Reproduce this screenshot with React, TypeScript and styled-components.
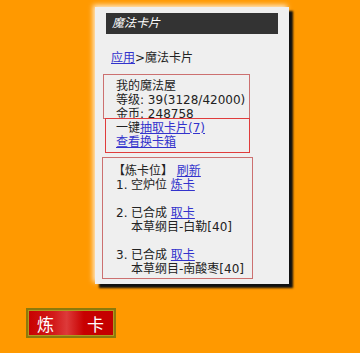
import React from 'react';
import styled, { createGlobalStyle } from 'styled-components';

const GlobalStyle = createGlobalStyle`
  html, body {
    margin: 0;
    padding: 0;
    background: #ff9900;
  }
  body {
    font-family: "DejaVu Sans", "Noto Sans CJK SC", sans-serif;
    font-size: 12px;
    color: #222;
  }
`;

const Page = styled.div`
  width: 360px;
  height: 353px;
  padding: 7px 0 0 0;
  box-sizing: border-box;
  overflow: hidden;
`;

const Panel = styled.div`
  margin-left: 95px;
  width: 194px;
  height: 277px;
  box-sizing: border-box;
  padding: 6px 11px 0 11px;
  background: #efefef;
  box-shadow: 4px 4px 2px #111, -2px -2px 5px rgba(255, 255, 255, 0.8);
`;

const TitleBar = styled.div`
  height: 21px;
  background: #333;
  color: #fff;
  font-style: italic;
  font-size: 12px;
  line-height: 21px;
  padding-left: 6px;
`;

const Crumb = styled.div`
  margin-top: 17px;
  padding-left: 5px;
  line-height: 14px;
`;

const Link = styled.a`
  color: #3333cc;
  text-decoration: underline;
  cursor: pointer;
`;

const Box = styled.div<{ $shift: number; $w: number; $h: number; $color: string; $pad: number }>`
  position: relative;
  margin-left: ${(p) => p.$shift}px;
  width: ${(p) => p.$w}px;
  height: ${(p) => p.$h}px;
  box-sizing: border-box;
  border: 1px solid ${(p) => p.$color};
  padding: ${(p) => p.$pad}px 0 0 ${(p) => 9 - p.$shift}px;
  line-height: 14px;
`;

const Line = styled.div<{ $indent?: boolean }>`
  height: 14px;
  white-space: nowrap;
  padding-left: ${(p) => (p.$indent ? 15 : 0)}px;
`;

const Blank = styled.div`
  height: 14px;
`;

const Num = styled.span`
  display: inline-block;
  width: 15px;
`;

const CastButton = styled.div`
  margin: 24px 0 0 26px;
  width: 90px;
  height: 30px;
  box-sizing: border-box;
  border: 2px solid #8c7a0c;
  box-shadow: inset 0 0 0 1px #b09a20;
  background: linear-gradient(90deg, #c80000 0%, #d21a1a 30%, #dd3a3a 45%, #c80000 65%, #c40000 100%);
  display: flex;
  align-items: center;
  justify-content: space-between;
  padding: 0 10px 0 9px;
  color: #fff;
  font-family: "Noto Sans CJK SC", sans-serif;
  font-size: 17px;
`;

const App: React.FC = () => {
  return (
    <Page>
      <GlobalStyle />
      <Panel>
        <TitleBar>魔法卡片</TitleBar>
        <Crumb>
          <Link>应用</Link>&gt;魔法卡片
        </Crumb>
        <div style={{ height: 9 }} />
        <Box $shift={-3} $w={147} $h={45} $color="#cc7070" $pad={4}>
          <Line>我的魔法屋</Line>
          <Line>等级: 39(3128/42000)</Line>
          <Line>金币: 248758</Line>
        </Box>
        <Box $shift={-1} $w={145} $h={35} $color="#e03c3c" $pad={2} style={{ marginTop: -1 }}>
          <Line>
            一键<Link>抽取卡片(7)</Link>
          </Line>
          <Line>
            <Link>查看换卡箱</Link>
          </Line>
        </Box>
        <Box $shift={-4} $w={151} $h={122} $color="#cc7070" $pad={6} style={{ marginTop: 4 }}>
          <Line style={{ marginLeft: -3 }}>
            【炼卡位】 <Link>刷新</Link>
          </Line>
          <Line>
            <Num>1.</Num>空炉位 <Link>炼卡</Link>
          </Line>
          <Blank />
          <Line>
            <Num>2.</Num>已合成 <Link>取卡</Link>
          </Line>
          <Line $indent>本草纲目-白勒[40]</Line>
          <Blank />
          <Line>
            <Num>3.</Num>已合成 <Link>取卡</Link>
          </Line>
          <Line $indent>本草纲目-南酸枣[40]</Line>
        </Box>
      </Panel>
      <CastButton>
        <span>炼</span>
        <span>卡</span>
      </CastButton>
    </Page>
  );
};

export default App;
